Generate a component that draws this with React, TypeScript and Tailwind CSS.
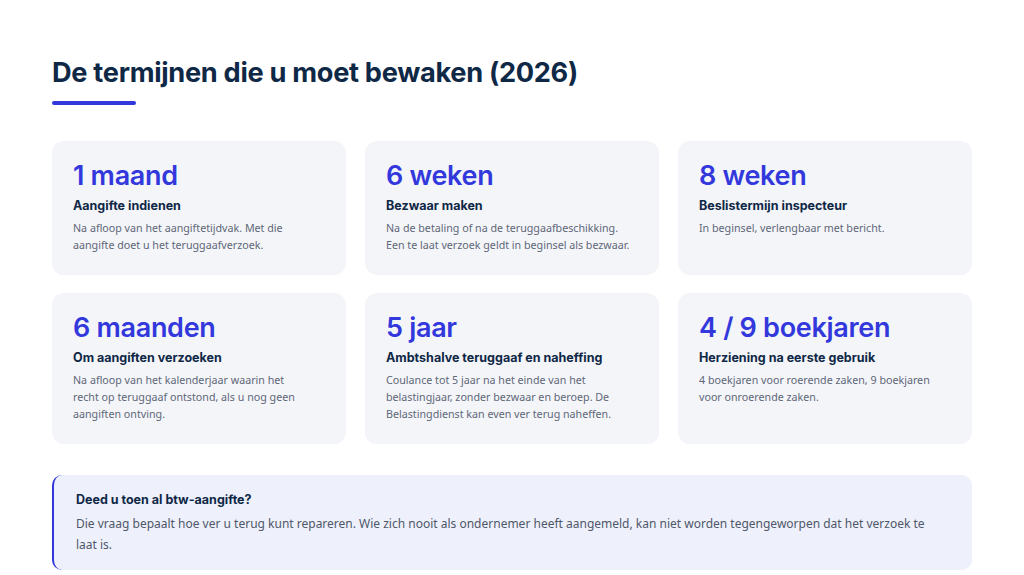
import React from "react";

const cards = [
  {
    big: "1 maand",
    title: "Aangifte indienen",
    body: ["Na afloop van het aangiftetijdvak. Met die aangifte doet u het teruggaafverzoek."],
  },
  {
    big: "6 weken",
    title: "Bezwaar maken",
    body: ["Na de betaling of na de teruggaafbeschikking. Een te laat verzoek geldt in beginsel als bezwaar."],
  },
  {
    big: "8 weken",
    title: "Beslistermijn inspecteur",
    body: ["In beginsel, verlengbaar met bericht."],
  },
  {
    big: "6 maanden",
    title: "Om aangiften verzoeken",
    body: ["Na afloop van het kalenderjaar waarin het", "recht op teruggaaf ontstond, als u nog geen aangiften ontving."],
  },
  {
    big: "5 jaar",
    title: "Ambtshalve teruggaaf en naheffing",
    body: ["Coulance tot 5 jaar na het einde van het belastingjaar, zonder bezwaar en beroep. De Belastingdienst kan even ver terug naheffen."],
  },
  {
    big: "4 / 9 boekjaren",
    title: "Herziening na eerste gebruik",
    body: ["4 boekjaren voor roerende zaken, 9 boekjaren voor onroerende zaken."],
  },
];

export default function App() {
  return (
    <div className="w-[1024px] h-[575px] bg-white overflow-hidden px-[52px] pt-[55px] font-[Inter,'DejaVu_Sans',sans-serif]">
      <h1 className="text-[27.2px] leading-[36px] font-bold text-[#0f2846] tracking-[-0.3px]">
        De termijnen die u moet bewaken (2026)
      </h1>
      <div className="mt-[10px] w-[84px] h-[4px] rounded-full bg-[#3238dc]" />

      <div className="mt-[36px] grid grid-cols-3 gap-x-[19px] gap-y-[18px]">
        {cards.map((c) => (
          <div
            key={c.big}
            className="bg-[#f4f5f9] rounded-[12px] pl-[21px] pr-[20px] pt-[18px] pb-[21px]"
          >
            <div className="text-[27px] leading-[34px] font-semibold text-[#3238dc] tracking-[-0.3px]">
              {c.big}
            </div>
            <div className="mt-[4px] text-[12.5px] leading-[18px] font-bold text-[#0f2846]">
              {c.title}
            </div>
            <p className="mt-[5px] text-[10.7px] leading-[17px] text-[#5e6778] font-['Noto_Sans','Open_Sans',sans-serif]">
              {c.body.map((line, i) => (
                <React.Fragment key={i}>
                  {i > 0 && <br />}
                  {line}
                </React.Fragment>
              ))}
            </p>
          </div>
        ))}
      </div>

      <div className="mt-[31px] bg-[#eef0fc] rounded-[10px] border-l-[2px] border-[#3238dc] pl-[22px] pr-[24px] pt-[16px] pb-[15px]">
        <div className="text-[12.5px] leading-[18px] font-bold text-[#0f2846]">
          Deed u toen al btw-aangifte?
        </div>
        <p className="mt-[4px] text-[12px] leading-[21px] text-[#4f5869] font-['Noto_Sans','Open_Sans',sans-serif]">
          Die vraag bepaalt hoe ver u terug kunt repareren. Wie zich nooit als ondernemer heeft aangemeld, kan niet worden tegengeworpen dat het verzoek te laat is.
        </p>
      </div>
    </div>
  );
}
